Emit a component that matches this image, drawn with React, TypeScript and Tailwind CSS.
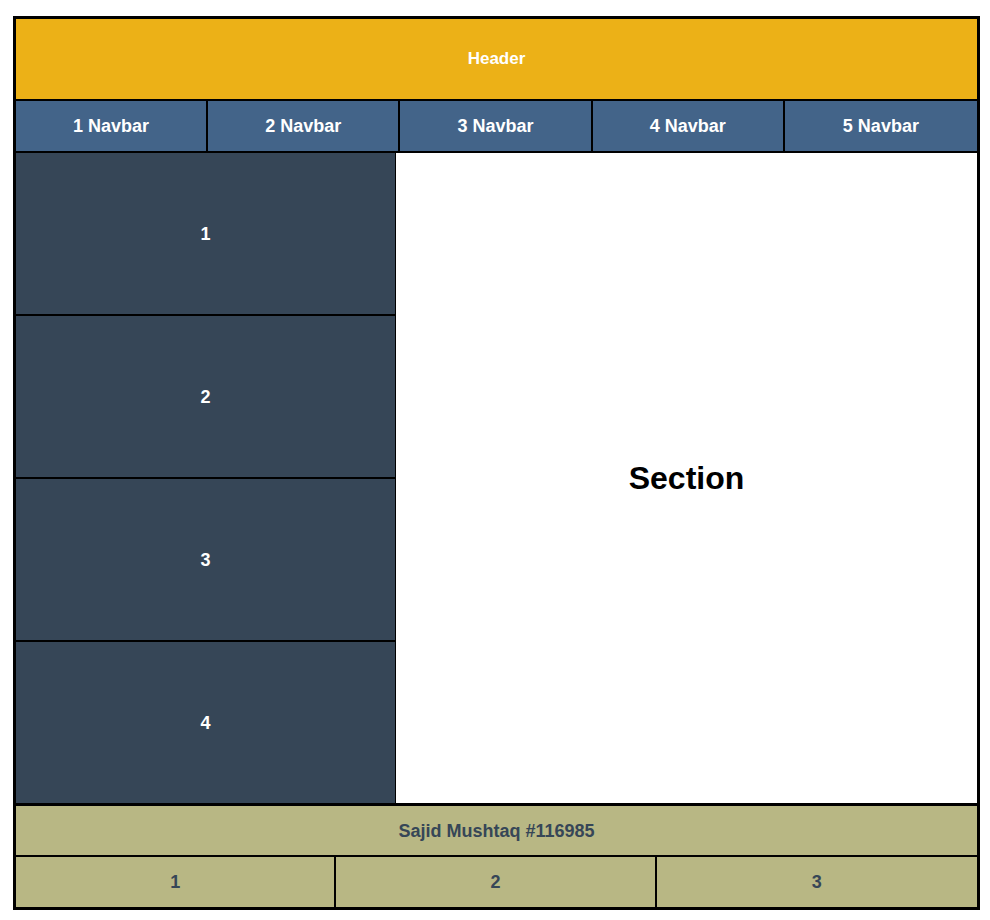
const navItems = ['1 Navbar', '2 Navbar', '3 Navbar', '4 Navbar', '5 Navbar'];
const sideItems = ['1', '2', '3', '4'];
const footItems = ['1', '2', '3'];

export default function App() {
  return (
    <div className="min-h-screen bg-white pt-4 pl-[13px] font-['Liberation_Sans',Arial,sans-serif]">
      <div className="w-[967px] border-[3px] border-black">
        <header className="flex h-[82px] items-center justify-center border-b-2 border-black bg-[#ecb117] text-[17px] font-bold text-white">
          Header
        </header>

        <nav className="grid h-[52px] grid-cols-5 border-b-2 border-black bg-[#436489]">
          {navItems.map((item, i) => (
            <div
              key={item}
              className={`flex items-center justify-center text-lg font-bold text-white ${
                i < navItems.length - 1 ? 'border-r-2 border-black' : ''
              }`}
            >
              {item}
            </div>
          ))}
        </nav>

        <div className="flex h-[650px]">
          <aside className="flex w-[380px] flex-col border-r border-black bg-[#364657]">
            {sideItems.map((item, i) => (
              <div
                key={item}
                className={`flex flex-1 items-center justify-center text-lg font-bold text-white ${
                  i < sideItems.length - 1 ? 'border-b-2 border-black' : ''
                }`}
              >
                {item}
              </div>
            ))}
          </aside>
          <section className="flex flex-1 items-center justify-center bg-white text-[32px] font-bold text-black">
            Section
          </section>
        </div>

        <footer className="bg-[#b8b784] text-lg font-bold text-[#364657]">
          <div className="flex h-[54px] items-center justify-center border-t-[3px] border-b-2 border-black">
            Sajid Mushtaq #116985
          </div>
          <div className="grid h-[50px] grid-cols-3">
            {footItems.map((item, i) => (
              <div
                key={item}
                className={`flex items-center justify-center ${
                  i < footItems.length - 1 ? 'border-r-2 border-black' : ''
                }`}
              >
                {item}
              </div>
            ))}
          </div>
        </footer>
      </div>
    </div>
  );
}
